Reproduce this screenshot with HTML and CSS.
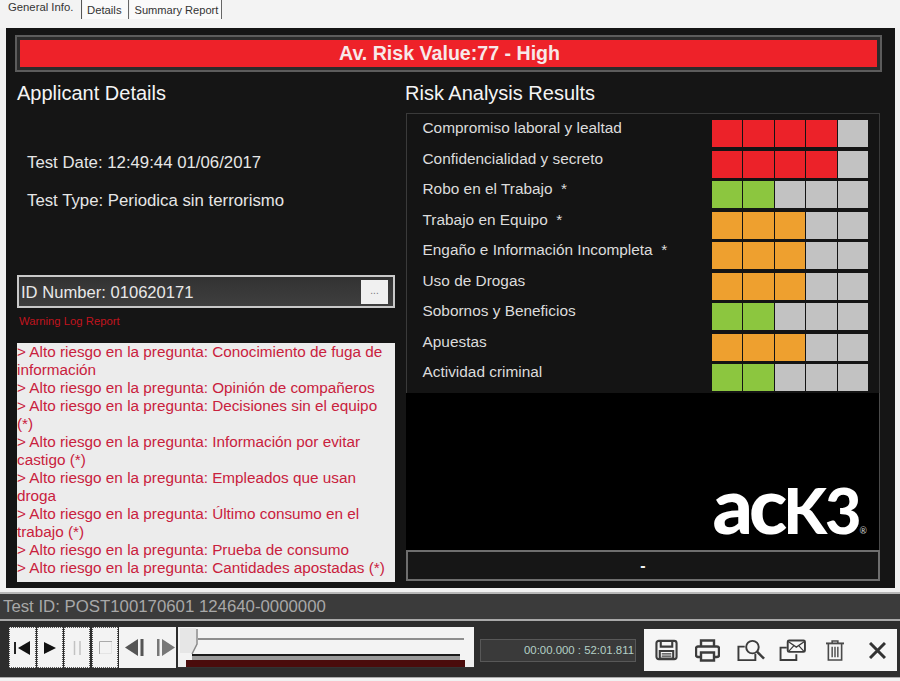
FILE: index.html
```html
<!DOCTYPE html>
<html lang="es">
<head>
<meta charset="utf-8">
<title>General Info</title>
<link rel="stylesheet" href="styles.css">
</head>
<body>
<div class="app">
  <nav class="tabs">
    <span class="tab tab-active">General Info.</span>
    <span class="tab tab-details">Details</span>
    <span class="tab tab-last">Summary Report</span>
  </nav>
  <main class="panel">
    <div class="banner"><div class="banner-fill">Av. Risk Value:77 - High</div></div>
    <div class="columns">
      <section class="left">
        <h2 class="heading">Applicant Details</h2>
        <p class="test-date">Test Date: 12:49:44 01/06/2017</p>
        <p class="test-type">Test Type: Periodica sin terrorismo</p>
        <div class="id-box"><span class="id-text">ID Number: 010620171</span><span class="more">...</span></div>
        <div class="warn-title">Warning Log Report</div>
        <div class="warn-list">
          <div>&gt; Alto riesgo en la pregunta: Conocimiento de fuga de información</div>
          <div>&gt; Alto riesgo en la pregunta: Opinión de compañeros</div>
          <div>&gt; Alto riesgo en la pregunta: Decisiones sin el equipo (*)</div>
          <div>&gt; Alto riesgo en la pregunta: Información por evitar castigo (*)</div>
          <div>&gt; Alto riesgo en la pregunta: Empleados que usan droga</div>
          <div>&gt; Alto riesgo en la pregunta: Último consumo en el trabajo (*)</div>
          <div>&gt; Alto riesgo en la pregunta: Prueba de consumo</div>
          <div>&gt; Alto riesgo en la pregunta: Cantidades apostadas (*)</div>
        </div>
      </section>
      <section class="right">
        <h2 class="heading">Risk Analysis Results</h2>
        <div class="results">
          <div class="row"><span class="label">Compromiso laboral y lealtad</span><div class="bar"><i class="r"></i><i class="r"></i><i class="r"></i><i class="r"></i><i></i></div></div>
          <div class="row"><span class="label">Confidencialidad y secreto</span><div class="bar"><i class="r"></i><i class="r"></i><i class="r"></i><i class="r"></i><i></i></div></div>
          <div class="row"><span class="label">Robo en el Trabajo&nbsp; *</span><div class="bar"><i class="g"></i><i class="g"></i><i></i><i></i><i></i></div></div>
          <div class="row"><span class="label">Trabajo en Equipo&nbsp; *</span><div class="bar"><i class="o"></i><i class="o"></i><i class="o"></i><i></i><i></i></div></div>
          <div class="row"><span class="label">Engaño e Información Incompleta&nbsp; *</span><div class="bar"><i class="o"></i><i class="o"></i><i class="o"></i><i></i><i></i></div></div>
          <div class="row"><span class="label">Uso de Drogas</span><div class="bar"><i class="o"></i><i class="o"></i><i class="o"></i><i></i><i></i></div></div>
          <div class="row"><span class="label">Sobornos y Beneficios</span><div class="bar"><i class="g"></i><i class="g"></i><i></i><i></i><i></i></div></div>
          <div class="row"><span class="label">Apuestas</span><div class="bar"><i class="o"></i><i class="o"></i><i class="o"></i><i></i><i></i></div></div>
          <div class="row"><span class="label">Actividad criminal</span><div class="bar"><i class="g"></i><i class="g"></i><i></i><i></i><i></i></div></div>
        </div>
        <div class="logo-area"><span class="logo"><span class="logo-ac">ac</span><span class="logo-k3">k3</span><span class="reg">®</span></span></div>
        <div class="dash-box">-</div>
      </section>
    </div>
  </main>
  <div class="test-id">Test ID: POST100170601 124640-0000000</div>
  <footer class="controls">
    <div class="transport">
      <button class="btn btn-first" aria-label="Start"><svg width="17" height="14" viewBox="0 0 17 14"><rect x="0" y="1" width="2" height="12" fill="#222"/><path d="M16 0v14L4 7z" fill="#111"/></svg></button>
      <button class="btn" aria-label="Play"><svg width="14" height="12" viewBox="0 0 14 12"><path d="M1 0l12 6-12 6z" fill="#111"/></svg></button>
      <button class="btn" aria-label="Pause"><svg width="9" height="14" viewBox="0 0 9 14"><path d="M1.500 0v14M7 0v14" stroke="#c2c2c2" stroke-width="1.500" fill="none"/></svg></button>
      <button class="btn btn-stop" aria-label="Stop"><svg width="13" height="13" viewBox="0 0 13 13"><path d="M.5 13V.5H13" stroke="#aaa" fill="none"/><path d="M12.500 1v11.500H1" stroke="#e4e4e4" fill="none"/></svg></button>
      <div class="steps">
        <svg width="19" height="17" viewBox="0 0 19 17"><path d="M13 0v17L0 8.500z" fill="#555"/><rect x="15.500" y="0" width="3" height="17" fill="#555"/></svg>
        <svg width="18" height="17" viewBox="0 0 18 17"><rect x="0" y="0" width="2.500" height="17" fill="#777"/><path d="M5 0v17l13-8.500z" fill="#777"/></svg>
      </div>
      <div class="slider">
        <div class="slider-top">
          <svg class="thumb" width="20" height="27" viewBox="0 0 20 27"><path d="M2 1h16v16l-4 9H2z" fill="#e6e6e6"/><path d="M19 2v15l-5 10" stroke="#8a8a8a" stroke-width="1.500" fill="none"/></svg>
          <span class="track"></span>
        </div>
        <div class="slider-edge"></div>
        <div class="slider-range"><span class="end"></span><span class="range"></span><span class="end"></span></div>
      </div>
    </div>
    <div class="time">00:00.000 : 52:01.811</div>
    <div class="tools">
      <svg class="tool-save" width="23" height="22" viewBox="0 0 24 22" fill="none" stroke="#3c3c3c" stroke-width="2.200"><rect x="1.500" y="1.500" width="21" height="19" rx="2.500"/><path d="M6 2v5.500h12V2"/><path d="M5 12h14v8H5z"/><path d="M7 15h10M7 17.500h10" stroke-width="1.300"/></svg>
      <svg class="tool-print" width="25" height="23" viewBox="0 0 25 23" fill="none" stroke="#3c3c3c" stroke-width="2.400"><path d="M6 7V1.500h13V7"/><path d="M6 18H3a2 2 0 0 1-2-2V9.500A2 2 0 0 1 3 7.500h19a2 2 0 0 1 2 2V16a2 2 0 0 1-2 2h-3"/><path d="M6 13.500h13v8H6z"/></svg>
      <svg class="tool-preview" width="28" height="23" viewBox="0 0 29 23" fill="none" stroke="#3c3c3c" stroke-width="2"><path d="M8 7.500H1.500V21.500H19V15"/><circle cx="16" cy="8" r="6.500"/><path d="M21 13l7 7" stroke-width="2.600"/></svg>
      <svg class="tool-mail" width="27" height="22" viewBox="0 0 28 23" fill="none" stroke="#3c3c3c" stroke-width="2"><path d="M8 9H1.500v13H18v-6"/><rect x="9" y="1.500" width="18" height="12" rx="1.500"/><path d="M9.500 2.500l8.500 6 8.500-6M10 13l5.500-6M26 13l-5.500-6" stroke-width="1.300"/></svg>
      <svg class="tool-trash" width="18" height="21" viewBox="0 0 19 22" fill="none" stroke="#4a4a4a" stroke-width="1.700"><path d="M0 3.500h19" stroke-width="2"/><path d="M6.500 3V1h6v2"/><path d="M2.500 4v17h14V4"/><path d="M6.500 7v11M9.500 7v11M12.500 7v11" stroke-width="1.500"/></svg>
      <svg class="tool-close" width="17" height="17" viewBox="0 0 17 17" fill="none" stroke="#333" stroke-width="3"><path d="M1 1l15 15M16 1L1 16"/></svg>
    </div>
  </footer>
</div>
</body>
</html>
```
FILE: styles.css
```css
* { box-sizing: border-box; }
html, body { margin: 0; padding: 0; }
body {
  width: 900px;
  height: 681px;
  overflow: hidden;
  background: #f1f1f1;
  font-family: "Liberation Sans", Arial, sans-serif;
}
.app { display: flex; flex-direction: column; height: 681px; }

.tabs {
  display: flex;
  height: 28px;
  padding-left: 8px;
  font-size: 11.300px;
  color: #333;
  background: #f3f3f3;
}
.tab {
  height: 19px;
  padding: 4px 4px 0 4px;
  border-right: 1px solid #666;
  margin-left: 1px;
  background: #fafafa;
  white-space: nowrap;
}
.tab-active {
  width: 74px;
  padding: 1px 0 0 0;
  margin-left: 0;
  background: #f3f3f3;
  border-right: 1px solid #555;
}
.tab-details { padding-right: 6px; }
.tab-last { padding-left: 5px; padding-right: 3px; font-size: 11.100px; }

.panel {
  width: 889px;
  height: 560px;
  margin-left: 6px;
  padding: 7px 13px 0 9px;
  background: #151515;
  color: #f2f2f2;
}
.banner {
  height: 37px;
  padding: 3px 3px;
  border: 2px solid #5c5c5c;
  background: #2b2b2b;
}
.banner-fill {
  height: 27px;
  padding-left: 2px;
  background: #ee2229;
  color: #f7e9e9;
  font-size: 19.600px;
  font-weight: 700;
  line-height: 26px;
  text-align: center;
}

.columns { display: flex; gap: 10px; }
.left { width: 380px; padding-left: 2px; }
.right { width: 477px; }
.heading {
  margin: 0;
  height: 41px;
  padding-top: 9px;
  font-size: 20px;
  font-weight: 400;
  line-height: 24px;
  color: #f4f4f4;
  white-space: nowrap;
}
.test-date, .test-type {
  margin: 0 0 0 10px;
  font-size: 16.800px;
  line-height: 20px;
  color: #e6e6e6;
}
.test-date { padding-top: 40px; }
.test-type { padding-top: 18px; height: 38px; }
.id-box {
  display: flex;
  align-items: center;
  justify-content: space-between;
  height: 33px;
  margin-top: 64px;
  padding: 0 5px 0 2px;
  border: 2px solid #c9c9c9;
  background: linear-gradient(#323232, #3f3f3f);
  font-size: 16.600px;
  color: #e8e8e8;
}
.id-text { padding-top: 2px; }
.more {
  width: 27px;
  height: 24px;
  background: #f0f0f0;
  color: #777;
  font-size: 10px;
  line-height: 22px;
  text-align: center;
}
.warn-title {
  height: 35px;
  padding: 7px 0 0 2px;
  font-size: 11.300px;
  line-height: 12px;
  color: #c0141e;
}
.warn-list {
  height: 239px;
  background: #ececec;
  color: #c9213d;
  font-size: 15.300px;
  line-height: 18px;
}

.results {
  width: 474px;
  height: 280px;
  margin-left: 1px;
  padding: 6px 11px 0 0;
  border: 1px solid #3a3a3a;
  border-bottom: 0;
  background: #141414;
}
.row {
  display: flex;
  align-items: flex-start;
  justify-content: space-between;
  height: 30.500px;
  padding-left: 15.500px;
}
.label {
  margin-top: -1px;
  font-size: 15.400px;
  line-height: 18px;
  color: #dcdcdc;
  white-space: nowrap;
}
.bar { display: flex; width: 156px; height: 27px; gap: 1px; }
.bar i { flex: 1; background: #c2c2c2; }
.bar i.r { background: #ec2229; }
.bar i.g { background: #8cc63f; }
.bar i.o { background: #eea02f; }

.logo-area {
  display: flex;
  align-items: flex-end;
  justify-content: flex-end;
  width: 474px;
  height: 157px;
  margin-left: 1px;
  padding: 0 12px 0 0;
  background: #000;
  border-right: 1px solid #4a4a4a;
}
.logo {
  display: flex;
  align-items: baseline;
  color: #fff;
  font-family: "Lato", "Liberation Sans", sans-serif;
  font-weight: 900;
  line-height: 38px;
}
.logo-ac { font-size: 79px; letter-spacing: -4px; }
.logo-k3 { font-size: 63px; letter-spacing: -2px; text-transform: uppercase; }
.reg { font-size: 9px; color: #ccc; font-weight: 400; }
.dash-box {
  height: 31px;
  width: 474px;
  margin-left: 1px;
  border: 2px solid #6e6e6e;
  background: #161616;
  text-align: center;
  font-size: 16px;
  font-weight: 700;
  line-height: 27px;
  color: #f2f2f2;
}

.test-id {
  height: 29px;
  margin-top: 4px;
  padding: 3px 0 0 3px;
  border-top: 2px solid #b8b8b8;
  border-bottom: 2px solid #a9a9a9;
  background: #3b3b3b;
  color: #a8a8a8;
  font-size: 16.800px;
  line-height: 20px;
}
.controls {
  display: flex;
  align-items: flex-start;
  height: 57px;
  padding: 6px 0 0 9px;
  background: #2d2d2d;
  border-bottom: 1px solid #aaa;
}
.transport { display: flex; gap: 1px; height: 41px; }
.btn {
  display: flex;
  align-items: center;
  justify-content: center;
  width: 26px;
  height: 41px;
  padding: 0;
  border: 1px dotted #555;
  background: #f3f3f3;
}
.btn-first { width: 27px; }
.btn-stop { margin-left: 1px; }
.steps {
  display: flex;
  align-items: center;
  justify-content: space-between;
  width: 57px;
  height: 41px;
  padding: 0 1px 0 6px;
  background: #f3f3f3;
}
.slider {
  display: flex;
  flex-direction: column;
  width: 296px;
  height: 41px;
  margin-left: 1px;
  background: #f3f3f3;
}
.slider-top { display: flex; align-items: flex-start; height: 27px; }
.thumb { flex: none; }
.track { flex: 1; height: 2px; margin: 11px 10px 0 0; background: #8e8e8e; }
.slider-edge {
  height: 6px;
  margin: 0 14px;
  border-top: 2px solid #1a1a1a;
  background: #9a9a9a;
}
.slider-range { display: flex; height: 8px; background: #333; padding-bottom: 1px; }
.end { width: 8px; background: #eee; }
.range { flex: 1; background: #4a0c0c; }
.slider-range .end:last-child { width: 9px; }

.time {
  width: 156px;
  height: 23px;
  margin: 12px 0 0 6px;
  padding-right: 1px;
  border: 1px solid #585858;
  background: #3a3a3a;
  color: #b4d0c6;
  font-size: 11.400px;
  line-height: 21px;
  text-align: right;
  white-space: nowrap;
}
.tools {
  display: flex;
  align-items: center;
  width: 253px;
  height: 42px;
  margin: 2px 0 0 8px;
  padding-left: 11px;
  background: #f6f6f6;
}
.tool-print { margin-left: 17px; }
.tool-preview { margin-left: 17px; }
.tool-mail { margin-left: 14px; }
.tool-trash { margin-left: 20px; }
.tool-close { margin-left: 25px; }
```
